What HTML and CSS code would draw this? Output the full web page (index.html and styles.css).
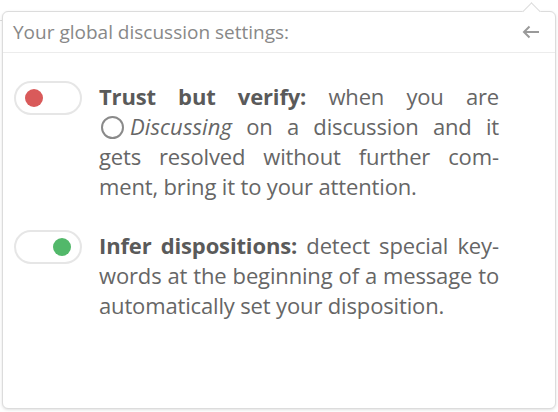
FILE: index.html
```html
<!DOCTYPE html>
<html>
<head>
<meta charset="utf-8">
<link rel="stylesheet" href="styles.css">
</head>
<body>
<div class="backdrop-line"></div>
<div class="popup">
  <div class="caret"></div>
  <div class="header">
    <span class="title">Your global discussion settings:</span>
    <svg class="back" width="18" height="14" viewBox="0 0 18 14"><path d="M17 7H2M7.5 1.5L2 7l5.5 5.5" fill="none" stroke="#9a9a9a" stroke-width="2"/></svg>
  </div>
  <div class="settings">
    <div class="row">
      <div class="toggle off"><span class="dot"></span></div>
      <p class="desc"><b>Trust but verify:</b> when you are <span class="disp"><span class="circle"></span><i>Discussing</i></span> on a discussion and it gets resolved without further com&shy;ment, bring it to your attention.</p>
    </div>
    <div class="row">
      <div class="toggle on"><span class="dot"></span></div>
      <p class="desc"><b>Infer dispositions:</b> detect special key&shy;words at the beginning of a message to automatically set your disposition.</p>
    </div>
  </div>
</div>
</body>
</html>
```
FILE: styles.css
```css
html, body {
  margin: 0;
  padding: 0;
  background: #fff;
  height: 412px;
  overflow: hidden;
  font-family: "Open Sans", "Noto Sans", sans-serif;
}
.backdrop-line {
  position: absolute;
  left: 0;
  top: 20px;
  width: 4px;
  height: 1px;
  background: #ddd;
}
.popup {
  position: relative;
  margin: 11px 2px 0 2px;
  height: 396px;
  border: 1px solid #dcdcdc;
  border-radius: 6px;
  box-shadow: 0 1px 3px rgba(0,0,0,0.12);
  background: #fff;
}
.caret {
  position: absolute;
  top: -7px;
  right: 17px;
  width: 12px;
  height: 12px;
  background: #fff;
  border-top: 1px solid #dcdcdc;
  border-left: 1px solid #dcdcdc;
  transform: rotate(45deg);
}
.header {
  display: flex;
  align-items: center;
  justify-content: space-between;
  height: 40px;
  padding: 0 15px 0 10px;
  border-bottom: 1px solid #ececec;
}
.title {
  font-size: 19px;
  color: #888;
}
.back {
  display: block;
}
.settings {
  padding: 28px 0 0 11px;
}
.row {
  display: flex;
  align-items: flex-start;
  gap: 17px;
  margin-bottom: 29px;
}
.toggle {
  flex: none;
  width: 46px;
  height: 30px;
  border: 2px solid #e6e6e6;
  border-radius: 17px;
  display: flex;
  align-items: center;
  padding: 0 9px;
}
.toggle.on {
  justify-content: flex-end;
}
.dot {
  width: 18px;
  height: 18px;
  border-radius: 50%;
}
.off .dot { background: #d95a5a; }
.on .dot { background: #52b86a; }
.desc {
  margin: 0;
  width: 400px;
  font-size: 22px;
  line-height: 30px;
  color: #666;
  text-align: justify;
  hyphens: manual;
  letter-spacing: -0.15px;
}
.desc b {
  color: #5a5a5a;
}
.disp {
  white-space: nowrap;
}
.disp i {
  letter-spacing: 0.1px;
}
.circle {
  display: inline-block;
  width: 23px;
  height: 23px;
  border: 2px solid #8a8a8a;
  border-radius: 50%;
  box-sizing: border-box;
  vertical-align: middle;
  margin: -4px 6px 0 2px;
}
```
